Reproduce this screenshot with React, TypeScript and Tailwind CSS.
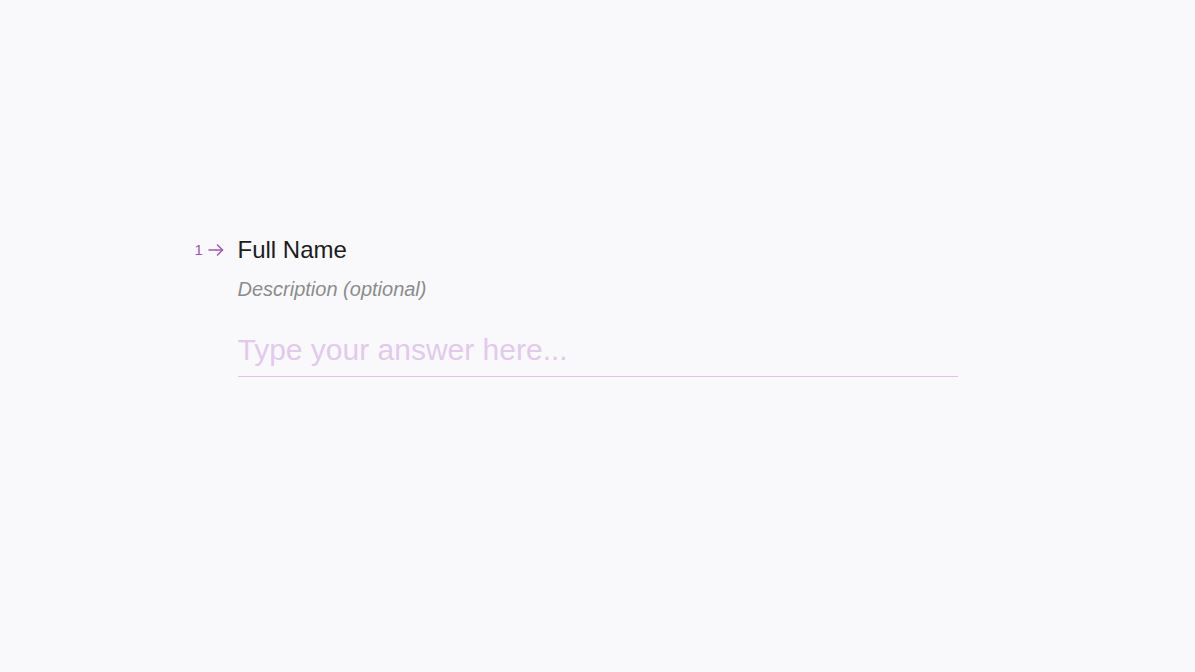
import React, { useState } from 'react';

const ArrowRight = () => (
  <svg className="w-[16px] h-[12px]" viewBox="0 0 16 12" fill="none" stroke="currentColor" strokeWidth={1.5} strokeLinecap="round" strokeLinejoin="round">
    <path d="M1 6h13.5" />
    <path d="M9.5 1l5 5-5 5" />
  </svg>
);

export default function App() {
  const [answer, setAnswer] = useState('');

  return (
    <div className="min-h-screen w-full bg-[#f9f9fb] font-['Liberation_Sans',Arial,sans-serif]">
      <div className="mx-auto w-[720px] pt-[236px]">
        <div className="relative">
          <div className="absolute -left-[43px] top-0 h-[28px] flex items-center gap-[5px] text-[#9b59b6]">
            <span className="text-[15px] leading-none -mt-[2px]">1</span>
            <ArrowRight />
          </div>
          <h1 className="text-[24px] leading-[28px] text-[#1c1c1c]">Full Name</h1>
          <p className="mt-[13px] text-[20px] leading-[24px] italic text-[#8c8c8c]">Description (optional)</p>
          <input
            value={answer}
            onChange={(e) => setAnswer(e.target.value)}
            placeholder="Type your answer here..."
            className="mt-[31px] w-full bg-transparent pb-[8px] text-[30px] leading-[36px] text-[#333] placeholder:text-[#e3c9ec] outline-none border-b border-[#e2c3ee]"
          />
        </div>
      </div>
    </div>
  );
}
